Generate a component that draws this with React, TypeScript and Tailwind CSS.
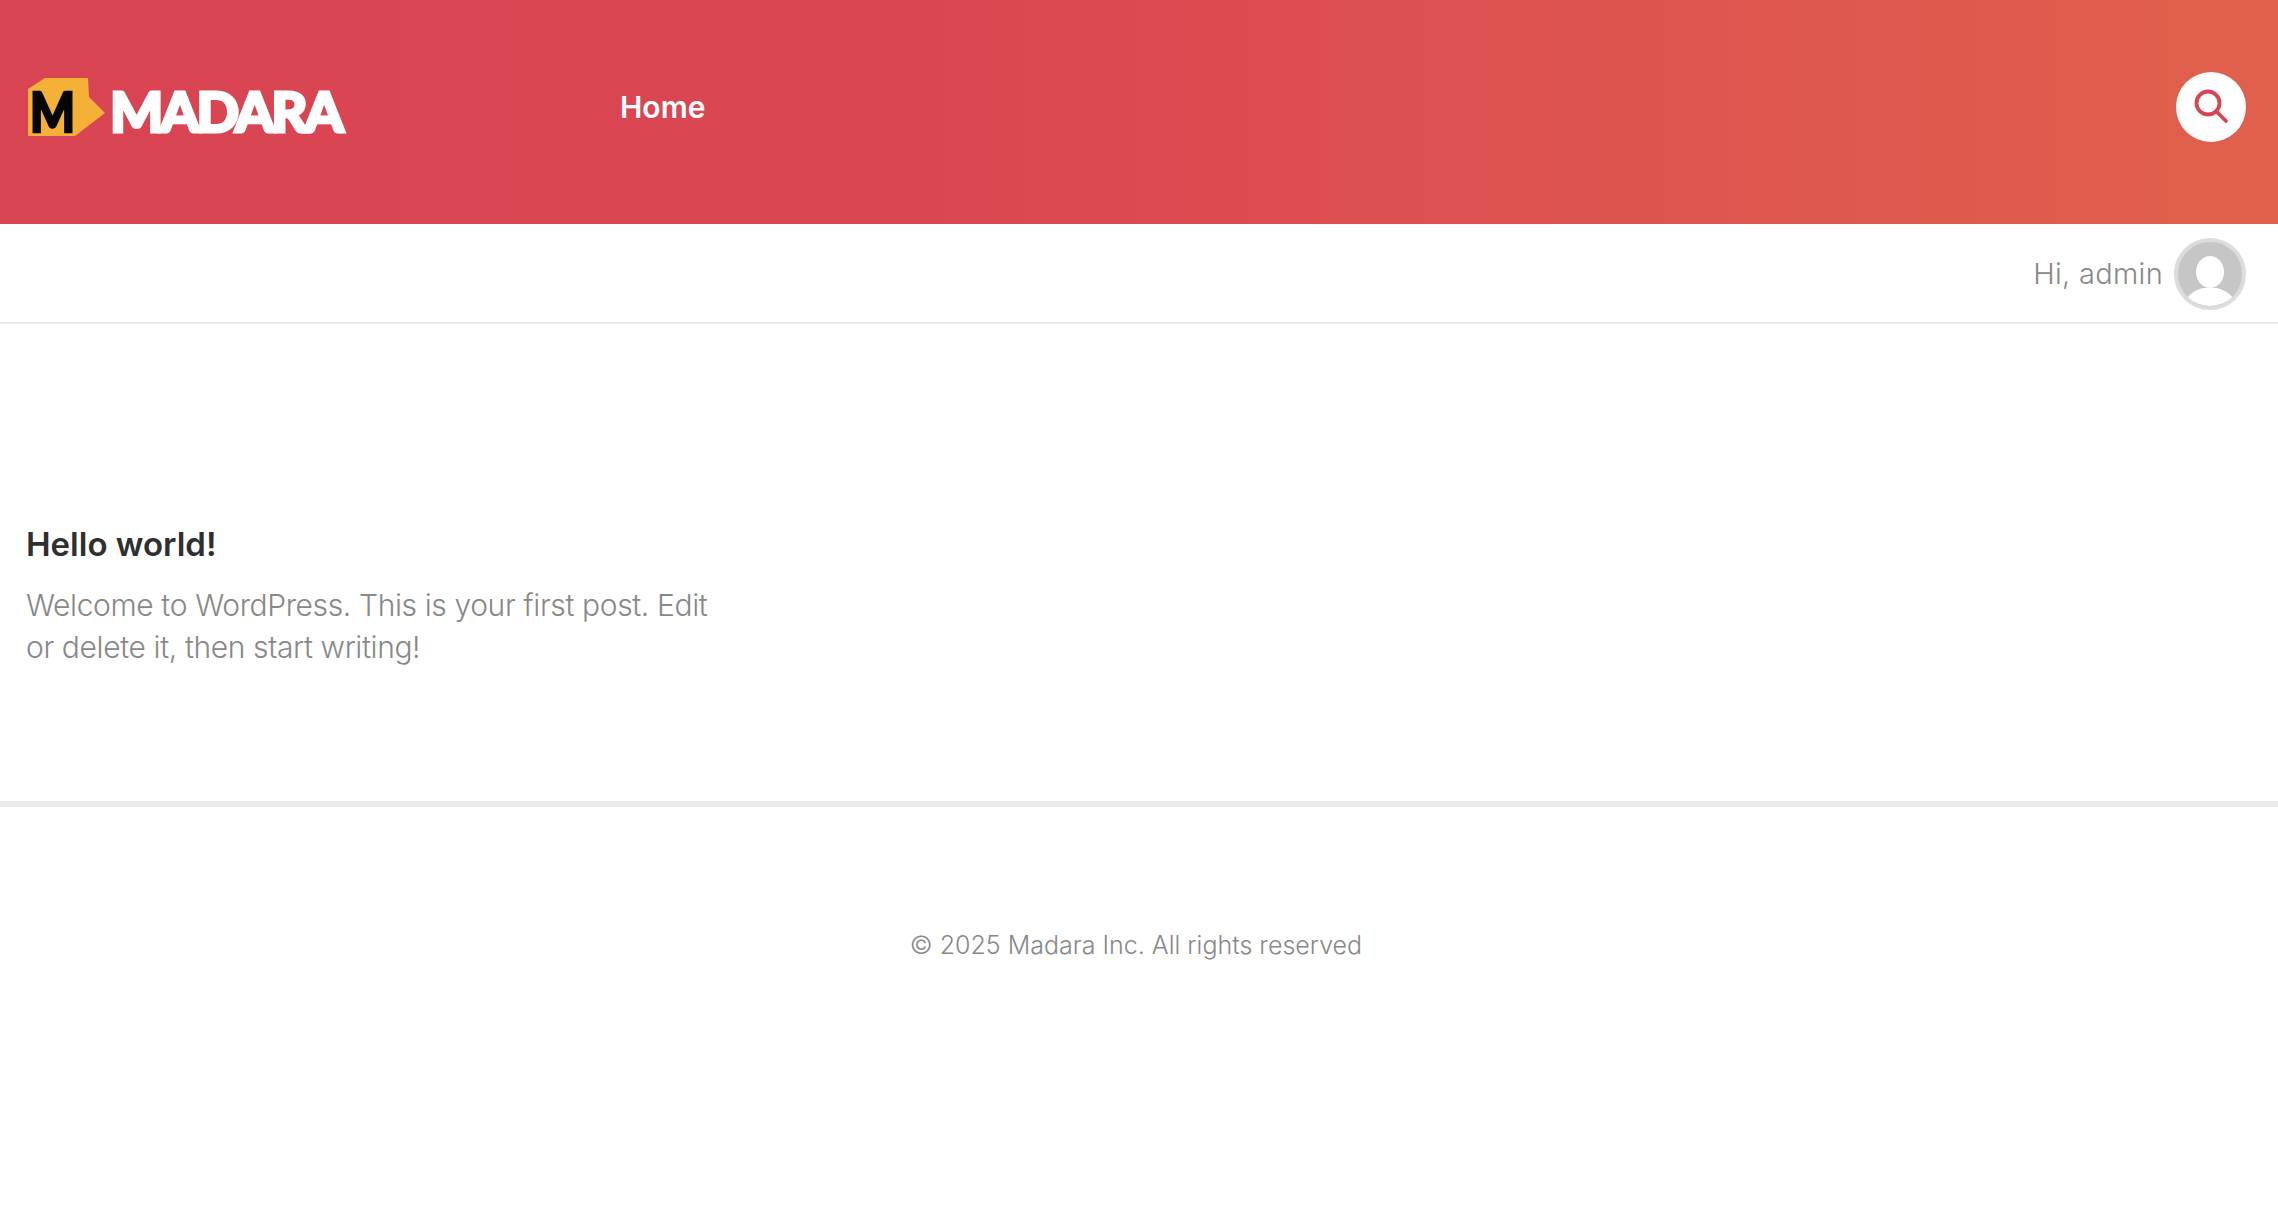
function LogoMark() {
  return (
    <svg width="80" height="60" viewBox="0 0 80 60" className="shrink-0 overflow-visible">
      <polygon points="2,11 19,0 62,0 63,19 79,35 49,58 2,58" fill="#f5b038" />
      <text
        x="4"
        y="54"
        fontFamily="Lato, sans-serif"
        fontWeight="900"
        fontSize="56"
        textLength="45"
        lengthAdjust="spacingAndGlyphs"
        fill="#050505"
        stroke="#050505"
        strokeWidth="2.5"
      >
        M
      </text>
    </svg>
  );
}

function SearchIcon() {
  return (
    <svg width="38" height="38" viewBox="0 0 38 38" fill="none" stroke="#d94452" strokeWidth="3.8" strokeLinecap="round">
      <circle cx="16" cy="15" r="11.5" />
      <path d="M24.5 23.5 L34 33" />
    </svg>
  );
}

function Avatar() {
  return (
    <div className="h-[72px] w-[72px] shrink-0 overflow-hidden rounded-full border-4 border-[#dcdcdc] bg-[#c6c6c6]">
      <svg viewBox="0 0 64 64" className="h-full w-full">
        <ellipse cx="32" cy="30" rx="14" ry="16" fill="#ffffff" />
        <path d="M9 56 Q14 49 25 46 L39 46 Q50 49 55 56 Q45 64 32 64 Q19 64 9 56 Z" fill="#ffffff" />
      </svg>
    </div>
  );
}

export default function App() {
  return (
    <div className="min-h-[1218px] bg-white font-['Inter',sans-serif] text-[#888888]">
      <header className="flex h-[224px] items-center bg-gradient-to-r from-[#d94452] via-[#da4652] via-40% to-[#e1604c] pb-[10px] pl-[26px] pr-[32px]">
        <div className="flex w-[594px] items-center pt-[2px]">
          <LogoMark />
          <span className="mt-[6px] ml-[4px] font-['Lato',sans-serif] text-[56px] leading-none font-black tracking-[-3px] text-white [-webkit-text-stroke:3px_white]">
            MADARA
          </span>
        </div>
        <nav className="flex-1">
          <a className="text-[30px] font-semibold text-white">Home</a>
        </nav>
        <button className="flex h-[70px] w-[70px] items-center justify-center rounded-full bg-white">
          <SearchIcon />
        </button>
      </header>

      <div className="flex h-[100px] items-center justify-end gap-[11px] border-b-2 border-[#ebebeb] pr-[32px] pt-[1px]">
        <span className="text-[29px] font-light tracking-[0.3px]">Hi, admin</span>
        <Avatar />
      </div>

      <main className="h-[477px] px-[26px] pt-[198px]">
        <h1 className="text-[33px] leading-[44px] font-semibold text-[#2f2f2f]">Hello world!</h1>
        <p className="mt-[18px] w-[700px] text-[30px] leading-[42px] font-light tracking-[-0.38px]">
          Welcome to WordPress. This is your first post. Edit or delete it, then start writing!
        </p>
      </main>

      <footer className="border-t-[6px] border-[#ebebeb] pt-[122px] pr-[6px] text-center text-[25px] leading-[32px] font-light">
        © 2025 Madara Inc. All rights reserved
      </footer>
    </div>
  );
}
